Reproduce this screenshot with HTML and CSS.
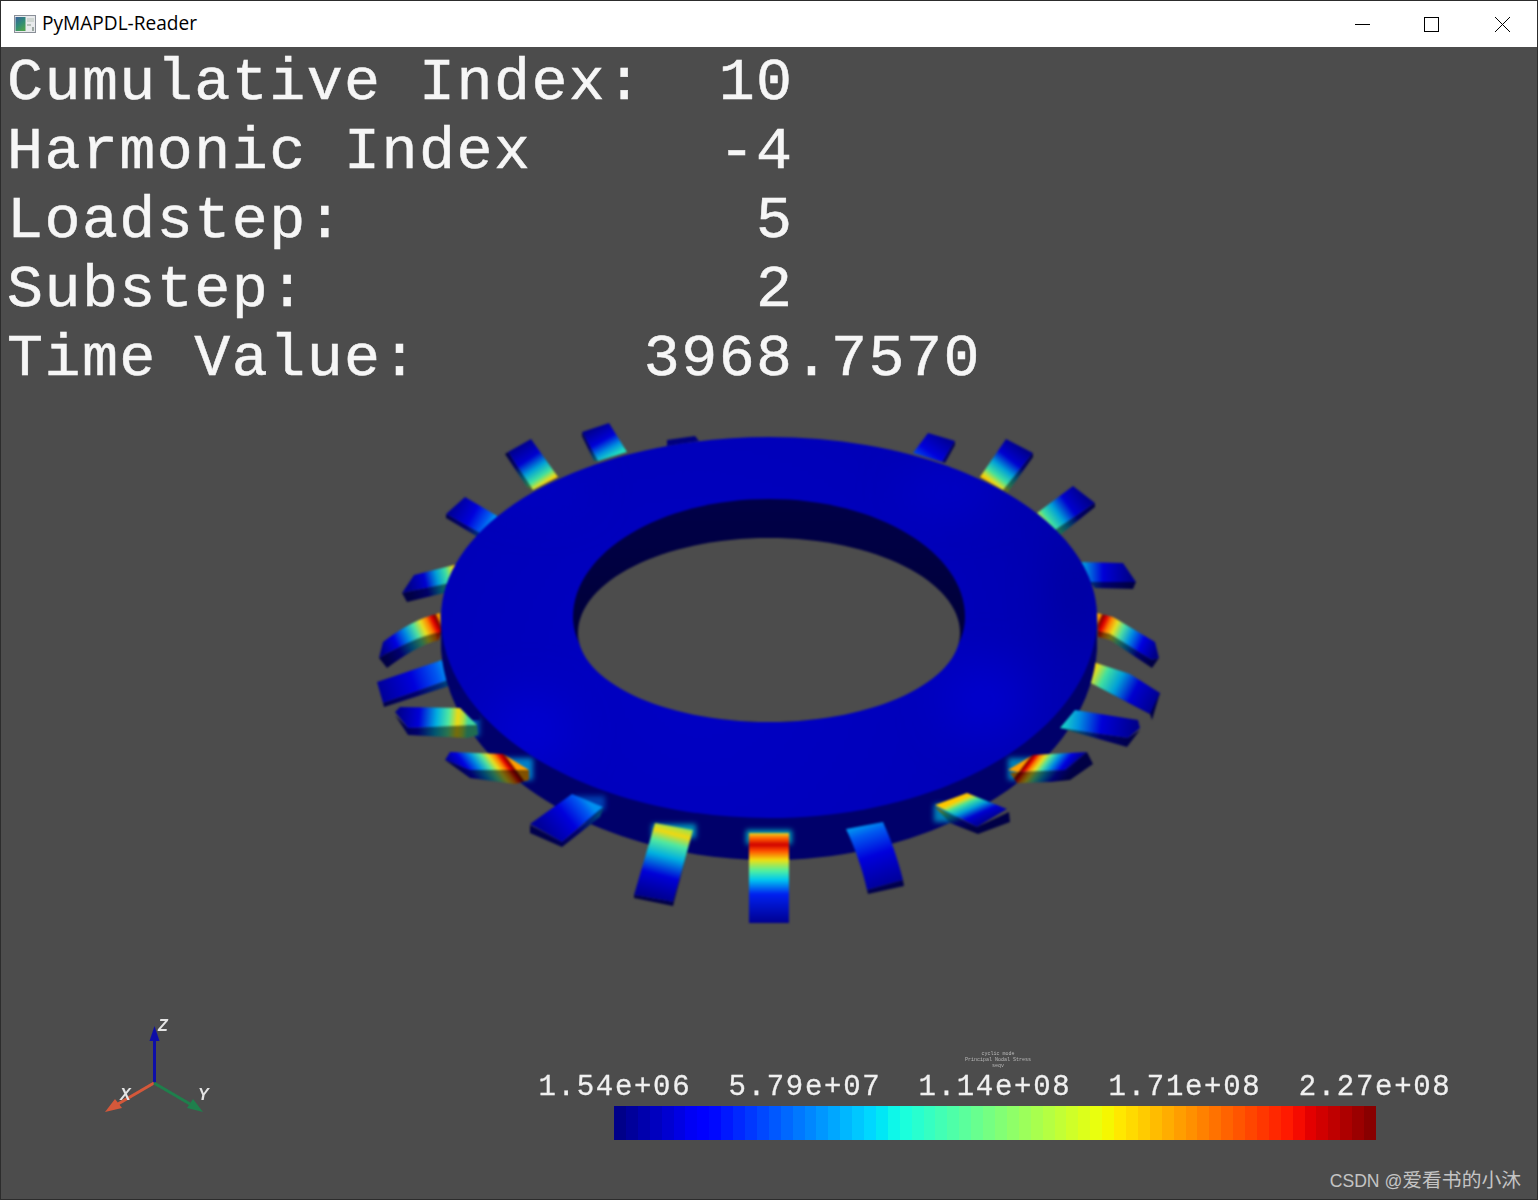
FILE: index.html
```html
<!DOCTYPE html>
<html lang="en">
<head>
<meta charset="utf-8">
<title>PyMAPDL-Reader</title>
<link rel="stylesheet" href="styles.css">
</head>
<body>
<div class="window">
  <header class="titlebar">
    <svg class="app-icon" viewBox="0 0 22 18" width="22" height="18" aria-hidden="true">
      <defs>
        <linearGradient id="iconfill" x1="0" y1="0" x2="0.6" y2="1">
          <stop offset="0" stop-color="#3c5f9c"/><stop offset="0.55" stop-color="#2f8a78"/><stop offset="1" stop-color="#4aa050"/>
        </linearGradient>
      </defs>
      <rect x="0.5" y="0.5" width="21" height="17" fill="#e8eaec" stroke="#8a8f98"/>
      <rect x="1.5" y="2" width="10" height="14" fill="url(#iconfill)"/>
      <rect x="13" y="3" width="7" height="4" fill="#cfd6d2"/>
      <rect x="13" y="9" width="4" height="2" fill="#b4c0b8"/>
      <rect x="18" y="12" width="2" height="4" fill="#9aa6a0"/>
    </svg>
    <span class="title">PyMAPDL-Reader</span>
    <div class="controls">
      <svg class="ctl" viewBox="0 0 16 16" width="16" height="16" aria-hidden="true"><path d="M1 8.5H16" stroke="#000" fill="none"/></svg>
      <svg class="ctl" viewBox="0 0 16 16" width="16" height="16" aria-hidden="true"><rect x="0.5" y="1.5" width="14" height="14" stroke="#000" fill="none"/></svg>
      <svg class="ctl" viewBox="0 0 16 16" width="16" height="16" aria-hidden="true"><path d="M1 1L16 16M16 1L1 16" stroke="#000" fill="none"/></svg>
    </div>
  </header>

  <main class="viewport">
    <pre class="readout">Cumulative Index:  10
Harmonic Index     -4
Loadstep:           5
Substep:            2
Time Value:      3968.7570</pre>

    <svg class="scene" viewBox="1 47 1536 1152" width="1536" height="1152" aria-hidden="true">
      <defs>
        <linearGradient id="low"><stop offset="0" stop-color="#00009a"/><stop offset=".5" stop-color="#0000dc"/><stop offset=".85" stop-color="#0058f0"/><stop offset="1" stop-color="#0090f0"/></linearGradient>
        <linearGradient id="mid"><stop offset="0" stop-color="#00008c"/><stop offset=".45" stop-color="#0000d8"/><stop offset=".75" stop-color="#0090e0"/><stop offset="1" stop-color="#20e0c0"/></linearGradient>
        <linearGradient id="warm"><stop offset="0" stop-color="#00008c"/><stop offset=".35" stop-color="#0000d0"/><stop offset=".6" stop-color="#00a0d8"/><stop offset=".8" stop-color="#40e0a0"/><stop offset=".93" stop-color="#d0e030"/><stop offset="1" stop-color="#ffc800"/></linearGradient>
        <linearGradient id="crest"><stop offset="0" stop-color="#00008c"/><stop offset=".3" stop-color="#0000d8"/><stop offset=".55" stop-color="#00b0e0"/><stop offset=".72" stop-color="#50e8a0"/><stop offset=".85" stop-color="#f0d810"/><stop offset=".93" stop-color="#b0e040"/><stop offset="1" stop-color="#40d8a0"/></linearGradient>
        <linearGradient id="hot"><stop offset="0" stop-color="#000088"/><stop offset=".25" stop-color="#0000e0"/><stop offset=".45" stop-color="#0090e0"/><stop offset=".6" stop-color="#50e0a0"/><stop offset=".72" stop-color="#e8e020"/><stop offset=".82" stop-color="#ff8000"/><stop offset=".9" stop-color="#e00000"/><stop offset=".96" stop-color="#800000"/><stop offset="1" stop-color="#ffa000"/></linearGradient>

        <linearGradient id="b2" href="#mid" gradientUnits="userSpaceOnUse" x1="595" y1="427" x2="612" y2="457"/>
        <linearGradient id="b3" href="#warm" gradientUnits="userSpaceOnUse" x1="520" y1="445" x2="546" y2="484"/>
        <linearGradient id="b4" href="#low" gradientUnits="userSpaceOnUse" x1="455" y1="505" x2="490" y2="525"/>
        <linearGradient id="b5" href="#warm" gradientUnits="userSpaceOnUse" x1="408" y1="584" x2="456" y2="572"/>
        <linearGradient id="b6" href="#hot" gradientUnits="userSpaceOnUse" x1="381" y1="650" x2="441" y2="622"/>
        <linearGradient id="b7" href="#low" gradientUnits="userSpaceOnUse" x1="380" y1="692" x2="446" y2="670"/>
        <linearGradient id="b8" href="#crest" gradientUnits="userSpaceOnUse" x1="398" y1="717" x2="468" y2="722"/>
        <linearGradient id="b9" href="#hot" gradientUnits="userSpaceOnUse" x1="445" y1="760" x2="487" y2="729"/>
        <linearGradient id="b10" href="#low" gradientUnits="userSpaceOnUse" x1="546" y1="833" x2="587" y2="800"/>
        <linearGradient id="b11" href="#crest" gradientUnits="userSpaceOnUse" x1="654" y1="898" x2="674" y2="822"/>
        <linearGradient id="b12" gradientUnits="userSpaceOnUse" x1="769" y1="833" x2="769" y2="923">
          <stop offset="0" stop-color="#e8d820"/><stop offset=".06" stop-color="#ff6000"/><stop offset=".13" stop-color="#d00000"/><stop offset=".2" stop-color="#ff5000"/><stop offset=".3" stop-color="#f0e010"/><stop offset=".42" stop-color="#50f0a0"/><stop offset=".52" stop-color="#00c8f0"/><stop offset=".68" stop-color="#0020f0"/><stop offset="1" stop-color="#000090"/>
        </linearGradient>
        <linearGradient id="b13" href="#low" gradientUnits="userSpaceOnUse" x1="885" y1="885" x2="865" y2="825"/>
        <linearGradient id="b14" href="#warm" gradientUnits="userSpaceOnUse" x1="1003" y1="815" x2="990" y2="786"/>
        <linearGradient id="b15" href="#hot" gradientUnits="userSpaceOnUse" x1="1087" y1="752" x2="1053" y2="726"/>
        <linearGradient id="b16" href="#mid" gradientUnits="userSpaceOnUse" x1="1135" y1="730" x2="1060" y2="720"/>
        <linearGradient id="b17" href="#warm" gradientUnits="userSpaceOnUse" x1="1156" y1="705" x2="1091" y2="671"/>
        <linearGradient id="b18" href="#hot" gradientUnits="userSpaceOnUse" x1="1157" y1="650" x2="1097" y2="622"/>
        <linearGradient id="b19" href="#mid" gradientUnits="userSpaceOnUse" x1="1130" y1="572" x2="1070" y2="572"/>
        <linearGradient id="b20" href="#warm" gradientUnits="userSpaceOnUse" x1="1084" y1="494" x2="1040" y2="526"/>
        <linearGradient id="b21" href="#warm" gradientUnits="userSpaceOnUse" x1="1020" y1="446" x2="991" y2="483"/>
        <linearGradient id="b22" href="#low" gradientUnits="userSpaceOnUse" x1="942" y1="437" x2="920" y2="468"/>

        <radialGradient id="face" gradientUnits="userSpaceOnUse" cx="700" cy="680" r="420">
          <stop offset="0" stop-color="#0000c4"/><stop offset=".6" stop-color="#0000ba"/><stop offset="1" stop-color="#0000ae"/>
        </radialGradient>
        <linearGradient id="bore" x1="0" y1="0" x2="0" y2="1">
          <stop offset="0" stop-color="#000048"/><stop offset="1" stop-color="#000030"/>
        </linearGradient>
        <clipPath id="wallclip"><path d="M441,617 L441,650 C450,770 600,860 769,860 C938,860 1088,770 1097,650 L1097,617 Z"/></clipPath>
        <clipPath id="faceclip"><path d="M441,617 C441,518 588,437 769,437 C950,437 1097,518 1097,617 C1097,728 950,818 769,818 C588,818 441,728 441,617Z"/></clipPath>
        <filter id="halo" x="-40%" y="-40%" width="180%" height="180%"><feGaussianBlur stdDeviation="2.5"/></filter>
        <filter id="sheen" x="-40%" y="-40%" width="180%" height="180%"><feGaussianBlur stdDeviation="22"/></filter>
      </defs>

      <g class="model">
        <!-- blades behind the disc -->
        <polygon points="667,440 695,436 699,441 667,446" fill="#00007c"/>
        <polygon class="side" points="582,432 598,461 594,461 582,436" fill="url(#b2)"/>
        <polygon points="582,432 609,423 627,452 598,461" fill="url(#b2)"/>
        <polygon class="side" points="505,454 508,452 533,490 527,487" fill="url(#b3)"/>
        <polygon points="508,452 531,439 558,477 533,490" fill="url(#b3)"/>
        <polygon class="side" points="446,514 446,518 478,537 480,533" fill="url(#b4)"/>
        <polygon points="446,514 465,497 499,517 480,533" fill="url(#b4)"/>
        <polygon class="side" points="402,593 407,602 448,592 450,583" fill="url(#b5)"/>
        <polygon points="402,593 414,575 458,564 450,583" fill="url(#b5)"/>
        <path class="side" d="M379,658 C400,646 420,636 441,632 L439,640 C420,645 405,655 387,668Z" fill="url(#b6)"/>
        <path d="M379,658 L383,642 C400,629 418,618 440,613 L441,632 C420,636 400,646 379,658Z" fill="url(#b6)"/>
        <polygon class="side" points="383,703 448,680 449,686 384,707" fill="url(#b7)"/>
        <polygon points="377,682 442,660 448,680 383,703" fill="url(#b7)"/>
        <polygon class="side" points="1089,682 1150,714 1152,720 1160,693" fill="url(#b17)"/>
        <polygon points="1089,682 1093,662 1130,674 1160,693 1150,714" fill="url(#b17)"/>
        <polygon class="side" points="1098,631 1110,634 1152,660 1159,658 1152,668 1110,640 1098,637" fill="url(#b18)"/>
        <polygon points="1097,613 1113,617 1155,642 1159,658 1152,660 1110,634 1098,631" fill="url(#b18)"/>
        <polygon class="side" points="1090,582 1136,582 1133,589 1095,588" fill="url(#b19)"/>
        <polygon points="1078,562 1123,563 1136,582 1090,582" fill="url(#b19)"/>
        <polygon class="side" points="1055,530 1060,535 1095,507 1095,503" fill="url(#b20)"/>
        <polygon points="1037,513 1073,486 1095,503 1055,530" fill="url(#b20)"/>
        <polygon class="side" points="1003,490 1008,492 1033,457 1033,453" fill="url(#b21)"/>
        <polygon points="980,477 1006,439 1033,453 1003,490" fill="url(#b21)"/>
        <polygon class="side" points="942,462 945,463 955,445 955,441" fill="url(#b22)"/>
        <polygon points="913,453 928,433 955,441 942,462" fill="url(#b22)"/>

        <!-- outer wall -->
        <path class="wall" d="M441,617 L441,650 C450,770 600,860 769,860 C938,860 1088,770 1097,650 L1097,617 Z"/>
        <g clip-path="url(#wallclip)">
          <g class="halo" filter="url(#halo)">
            <rect x="503" y="758" width="30" height="22" fill="#0080c8"/>
            <rect x="575" y="796" width="30" height="14" fill="#003cb0"/>
            <rect x="652" y="824" width="44" height="14" fill="#0090b8"/>
            <rect x="746" y="830" width="46" height="14" fill="#00a0b8"/>
            <rect x="934" y="804" width="24" height="18" fill="#0080b8"/>
            <rect x="1008" y="758" width="26" height="22" fill="#0080b8"/>
            <rect x="470" y="718" width="10" height="18" fill="#0050a8"/>
          </g>
          <polygon points="445,690 470,690 480,720 455,720" fill="#000070"/>
        </g>

        <!-- disc top face with bore -->
        <path d="M441,617 C441,518 588,437 769,437 C950,437 1097,518 1097,617 C1097,728 950,818 769,818 C588,818 441,728 441,617Z" fill="url(#face)"/>
        <g clip-path="url(#faceclip)">
          <g filter="url(#sheen)">
            <ellipse cx="530" cy="730" rx="45" ry="40" fill="#0000da" opacity=".6"/>
            <ellipse cx="985" cy="700" rx="45" ry="40" fill="#0000d8" opacity=".6"/>
            <ellipse cx="950" cy="490" rx="50" ry="22" fill="#0000d4" opacity=".6"/>
            <ellipse cx="1075" cy="590" rx="20" ry="60" fill="#000098" opacity=".7"/>
            <ellipse cx="540" cy="490" rx="50" ry="18" fill="#0000cc" opacity=".5"/>
          </g>
        </g>
        <path d="M573,617 C573,552 661,499 769,499 C877,499 965,552 965,617 C965,675 877,722 769,722 C661,722 573,675 573,617Z" fill="url(#bore)"/>
        <path class="hole" d="M578,633 C578,581 664,538 769,538 C874,538 960,581 960,633 C960,680 877,722 769,722 C661,722 578,680 578,633Z"/>

        <!-- blades in front of the wall -->
        <polygon class="side" points="395,715 408,735 467,738 478,735 477,725 408,728" fill="url(#b8)"/>
        <polygon points="395,712 400,707 460,708 477,725 408,728" fill="url(#b8)"/>
        <polygon class="side" points="445,760 470,778 515,784 529,780 529,770 470,770" fill="url(#b9)"/>
        <polygon points="445,760 450,752 503,754 529,770 470,770" fill="url(#b9)"/>
        <polygon class="side" points="530,825 530,833 562,847 600,817 604,807 562,842" fill="url(#b10)"/>
        <polygon points="530,824 572,794 603,807 562,842" fill="url(#b10)"/>
        <polygon class="side" points="634,895 634,898 673,906 693,830 673,902" fill="url(#b11)"/>
        <polygon points="655,823 693,830 673,902 634,895" fill="url(#b11)"/>
        <rect x="749" y="833" width="40" height="90" fill="url(#b12)"/>
        <polygon class="side" points="867,890 868,894 904,886 903,880" fill="url(#b13)"/>
        <path d="M846,829 L883,822 C892,842 898,860 903,880 L867,890 C862,868 855,848 846,829Z" fill="url(#b13)"/>
        <polygon class="side" points="935,807 950,823 978,834 1010,822 1009,812 977,827" fill="url(#b14)"/>
        <polygon points="935,805 967,793 1007,809 977,827" fill="url(#b14)"/>
        <polygon class="side" points="1010,773 1017,783 1050,782 1070,780 1093,764 1087,752 1065,770 1018,772" fill="url(#b15)"/>
        <polygon points="1008,770 1033,755 1087,752 1065,770 1018,772" fill="url(#b15)"/>
        <polygon class="side" points="1060,728 1127,747 1140,730 1128,738" fill="url(#b16)"/>
        <polygon points="1060,728 1075,710 1138,720 1140,728 1128,738" fill="url(#b16)"/>
      </g>

      <g class="triad">
        <path d="M154.500,1083V1040" stroke="#0e0ea8" stroke-width="3" fill="none"/>
        <polygon points="154.500,1026 149.500,1041 159.500,1041" fill="#0e0ea8"/>
        <path d="M154,1083L118,1104" stroke="#d4583a" stroke-width="3" fill="none"/>
        <polygon points="105,1112 115,1099 122,1108" fill="#d4583a"/>
        <path d="M154,1083L190,1104" stroke="#1f7f4c" stroke-width="3" fill="none"/>
        <polygon points="203,1112 187,1108 193,1099" fill="#1f7f4c"/>
        <text class="axis" x="158" y="1031">Z</text>
        <text class="axis" x="120" y="1100">X</text>
        <text class="axis" x="198" y="1100">Y</text>
      </g>
    </svg>

    <div class="scalarbar">
      <div class="bar-title">
        <span>cyclic mode</span>
        <span>Principal Nodal Stress</span>
        <span>seqv</span>
      </div>
      <div class="bar-labels">
        <span>1.54e+06</span>
        <span>5.79e+07</span>
        <span>1.14e+08</span>
        <span>1.71e+08</span>
        <span>2.27e+08</span>
      </div>
      <div class="bar" id="bar"></div>
    </div>

    <div class="watermark"><span class="wm-latin">CSDN @</span>爱看书的小沐</div>
  </main>
</div>
<script src="script.js"></script>
</body>
</html>
```

FILE: styles.css
```css
* { box-sizing: border-box; }
html, body { margin: 0; padding: 0; }
body { width: 1538px; height: 1200px; overflow: hidden; background: #4c4c4c; }

.window {
  display: flex;
  flex-direction: column;
  width: 1538px;
  height: 1200px;
  border: 1px solid #2c2c2c;
  background: #fff;
}

.titlebar {
  display: flex;
  align-items: center;
  flex: 0 0 46px;
  padding-left: 13px;
  background: #fff;
}
.app-icon { flex: none; margin-right: 6px; }
.title {
  padding-bottom: 2px;
  font-family: "Open Sans", "Noto Sans", sans-serif;
  font-size: 19.1px;
  color: #000;
  white-space: nowrap;
}
.controls {
  display: flex;
  align-items: center;
  gap: 54px;
  margin-left: auto;
  padding-right: 27px;
}
.ctl { display: block; }

.viewport {
  position: relative;
  flex: 1;
  overflow: hidden;
  background: #4c4c4c;
}

.readout {
  position: relative;
  z-index: 1;
  margin: 0;
  padding: 2px 0 0 6px;
  font-family: "Liberation Mono", monospace;
  font-size: 60px;
  line-height: 69px;
  letter-spacing: 1.45px;
  color: #f6f6f6;
  -webkit-text-stroke: 0.5px #f6f6f6;
  filter: blur(0.7px);
}

.scene { position: absolute; left: 0; top: 0; display: block; }
.model { filter: blur(0.8px); }
.side { filter: brightness(0.5); }
.wall { fill: #00006a; }
.hole { fill: #4c4c4c; }
.triad { filter: blur(0.7px); }
.axis {
  font-family: "Liberation Sans", sans-serif;
  font-size: 16px;
  font-style: italic;
  font-weight: 700;
  fill: #e4e4e4;
}

.scalarbar {
  position: absolute;
  left: 519px;
  top: 1004px;
  width: 950px;
  display: flex;
  flex-direction: column;
  align-items: center;
}
.bar-title {
  display: flex;
  flex-direction: column;
  align-items: center;
  margin-left: 6px;
  font-family: "Liberation Mono", monospace;
  font-size: 5px;
  line-height: 6px;
  color: #b8b8b8;
  filter: blur(0.3px);
}
.bar-labels {
  display: flex;
  justify-content: space-between;
  width: 913px;
  margin-top: 2px;
  font-family: "Liberation Mono", monospace;
  font-size: 29px;
  line-height: 34px;
  letter-spacing: 1.7px;
  color: #f0f0f0;
  -webkit-text-stroke: 0.3px #f0f0f0;
  filter: blur(0.5px);
}
.bar {
  display: flex;
  width: 762px;
  height: 34px;
  margin-top: 1px;
}
.band { flex: 1; }

.watermark {
  position: absolute;
  right: 16px;
  bottom: 5px;
  font-family: "Liberation Sans", "Noto Sans CJK SC", sans-serif;
  font-size: 19.8px;
  line-height: 26px;
  color: #c4c4c4;
  white-space: nowrap;
}
.wm-latin { font-size: 17.6px; }
```

FILE: script.js
```js
// Jet colour map sampled into the 64 bands of the scalar bar.
function ramp(x, pts) {
  for (let i = 1; i < pts.length; i++) {
    if (x <= pts[i][0]) {
      const [x0, y0] = pts[i - 1];
      const [x1, y1] = pts[i];
      return y0 + (y1 - y0) * (x - x0) / (x1 - x0);
    }
  }
  return pts[pts.length - 1][1];
}
const R = [[0, 0], [0.35, 0], [0.66, 1], [0.89, 1], [1, 0.5]];
const G = [[0, 0], [0.125, 0], [0.375, 1], [0.64, 1], [0.91, 0], [1, 0]];
const B = [[0, 0.5], [0.11, 1], [0.34, 1], [0.65, 0], [1, 0]];
const bar = document.getElementById('bar');
for (let i = 0; i < 64; i++) {
  const x = (i + 0.5) / 64;
  const band = document.createElement('span');
  band.className = 'band';
  const c = [R, G, B].map(p => Math.round(ramp(x, p) * 255));
  band.style.background = `rgb(${c.join(',')})`;
  bar.appendChild(band);
}
```
